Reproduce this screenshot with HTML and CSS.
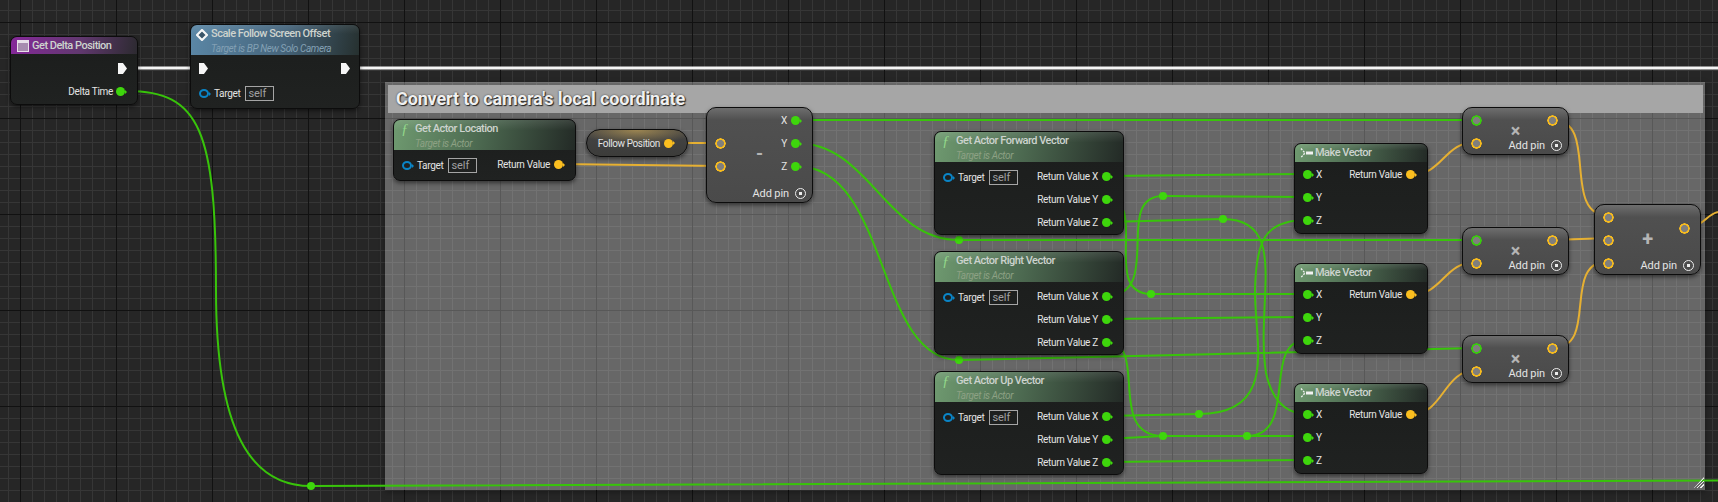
FILE: index.html
```html
<!DOCTYPE html>
<html>

<head>
	<title>Blueprint Graph</title>
	<link rel="stylesheet" href="styles.css">
</head>

<body>
	<div class="graph">

		<div class="comment">
			<div class="comment-title">Convert to camera's local coordinate</div>
		</div>

		<svg class="wires" width="1718" height="502" viewBox="0 0 1718 502">
			<g class="wire-exec">
				<path d="M127 68H199"/>
				<path d="M349 68H1718"/>
			</g>
			<g class="wire-green">
				<path d="M127 91C200 91 216 130 216 290C216 430 250 486 311 486L1718 480.5"/>
				<path d="M796 120H1477"/>
				<path d="M796 143C870 143 885 240 959 240H1477"/>
				<path d="M796 166C890 166 875 360 959 360L1477 348"/>
				<path d="M1106 176L1307 174"/>
				<path d="M1106 199C1150 199 1100 294 1151 294H1307"/>
				<path d="M1106 296C1165 296 1112 196 1163 196L1307 197"/>
				<path d="M1106 222L1223 219C1290 219 1255 300 1266 373C1272 400 1285 414 1307 414"/>
				<path d="M1106 319L1307 317"/>
				<path d="M1106 342C1150 342 1105 436 1163 436H1307"/>
				<path d="M1106 439L1163 436"/>
				<path d="M1247 436C1300 436 1260 340 1307 340"/>
				<path d="M1106 416L1199 414C1280 414 1254 340 1255 290C1256 240 1265 220 1307 220"/>
				<path d="M1106 462L1307 460"/>
			</g>
			<g class="wire-orange">
				<path d="M669 143H720"/>
				<path d="M558 164L720 166"/>
				<path d="M1409 175C1445 175 1442 142 1477 142"/>
				<path d="M1409 295C1445 295 1442 262 1477 262"/>
				<path d="M1409 415C1445 415 1442 370 1477 370"/>
				<path d="M1553 120C1600 120 1560 216 1609 216"/>
				<path d="M1553 240L1609 238"/>
				<path d="M1553 348C1600 348 1560 261 1609 261"/>
				<path d="M1685 227C1705 227 1705 215 1718 212"/>
			</g>
			<g class="knots">
				<circle cx="311" cy="486" r="4"/>
				<circle cx="959" cy="240" r="4"/>
				<circle cx="959" cy="360" r="4"/>
				<circle cx="1151" cy="294" r="4"/>
				<circle cx="1163" cy="196" r="4"/>
				<circle cx="1223" cy="219" r="4"/>
				<circle cx="1199" cy="414" r="4"/>
				<circle cx="1163" cy="436" r="4"/>
				<circle cx="1247" cy="436" r="4"/>
			</g>
		</svg>

		<!-- event and call nodes -->
		<div class="node n-delta">
			<div class="head head-purple">
				<svg class="ico" width="12" height="12" viewBox="0 0 12 12"><rect width="12" height="12" fill="#e8e0ea"/><rect x="1" y="3" width="10" height="8" fill="#a78cb0"/></svg>
				<span class="title">Get Delta Position</span>
			</div>
			<div class="pins pins-delta">
				<div class="col col-out">
					<div class="row"><i class="exec"></i></div>
					<div class="row"><span>Delta Time</span><i class="pin green"></i></div>
				</div>
			</div>
		</div>

		<div class="node n-scale">
			<div class="head head-blue head-tall">
				<svg class="ico" width="12" height="12" viewBox="0 0 12 12"><path d="M6 1L11 6L6 11L1 6Z" fill="#3a5568" stroke="#f6f6f6" stroke-width="2.2"/></svg>
				<div>
					<div class="title">Scale Follow Screen Offset</div>
					<div class="sub sub-blue">Target is BP New Solo Camera</div>
				</div>
			</div>
			<div class="pins pins-scale">
				<div class="col">
					<div class="row"><i class="exec"></i></div>
					<div class="row"><i class="ref"></i><span>Target</span><b class="self">self</b></div>
				</div>
				<div class="col col-out">
					<div class="row"><i class="exec"></i></div>
				</div>
			</div>
		</div>

		<!-- actor getters -->
		<div class="node n-location">
			<div class="head head-green head-tall">
				<em class="fn">&#402;</em>
				<div>
					<div class="title">Get Actor Location</div>
					<div class="sub">Target is Actor</div>
				</div>
			</div>
			<div class="pins pins-fn">
				<div class="col col-target">
					<div class="row"><i class="ref"></i><span>Target</span><b class="self">self</b></div>
				</div>
				<div class="col col-out">
					<div class="row"><span>Return Value</span><i class="pin orange"></i></div>
				</div>
			</div>
		</div>

		<div class="node n-forward">
			<div class="head head-green head-tall">
				<em class="fn">&#402;</em>
				<div>
					<div class="title">Get Actor Forward Vector</div>
					<div class="sub">Target is Actor</div>
				</div>
			</div>
			<div class="pins pins-fn">
				<div class="col col-target">
					<div class="row"><i class="ref"></i><span>Target</span><b class="self">self</b></div>
				</div>
				<div class="col col-out">
					<div class="row"><span>Return Value X</span><i class="pin green"></i></div>
					<div class="row"><span>Return Value Y</span><i class="pin green"></i></div>
					<div class="row"><span>Return Value Z</span><i class="pin green"></i></div>
				</div>
			</div>
		</div>

		<div class="node n-right">
			<div class="head head-green head-tall">
				<em class="fn">&#402;</em>
				<div>
					<div class="title">Get Actor Right Vector</div>
					<div class="sub">Target is Actor</div>
				</div>
			</div>
			<div class="pins pins-fn">
				<div class="col col-target">
					<div class="row"><i class="ref"></i><span>Target</span><b class="self">self</b></div>
				</div>
				<div class="col col-out">
					<div class="row"><span>Return Value X</span><i class="pin green"></i></div>
					<div class="row"><span>Return Value Y</span><i class="pin green"></i></div>
					<div class="row"><span>Return Value Z</span><i class="pin green"></i></div>
				</div>
			</div>
		</div>

		<div class="node n-up">
			<div class="head head-green head-tall">
				<em class="fn">&#402;</em>
				<div>
					<div class="title">Get Actor Up Vector</div>
					<div class="sub">Target is Actor</div>
				</div>
			</div>
			<div class="pins pins-fn">
				<div class="col col-target">
					<div class="row"><i class="ref"></i><span>Target</span><b class="self">self</b></div>
				</div>
				<div class="col col-out">
					<div class="row"><span>Return Value X</span><i class="pin green"></i></div>
					<div class="row"><span>Return Value Y</span><i class="pin green"></i></div>
					<div class="row"><span>Return Value Z</span><i class="pin green"></i></div>
				</div>
			</div>
		</div>

		<!-- variable -->
		<div class="node var n-follow">
			<span>Follow Position</span><i class="pin orange"></i>
		</div>

		<!-- math nodes -->
		<div class="node op n-sub">
			<div class="col op-in">
				<div class="row"></div>
				<div class="row"><i class="ring orange"></i></div>
				<div class="row"><i class="ring orange"></i></div>
			</div>
			<div class="op-sign">-</div>
			<div class="col col-out op-out">
				<div class="row"><span>X</span><i class="pin green"></i></div>
				<div class="row"><span>Y</span><i class="pin green"></i></div>
				<div class="row"><span>Z</span><i class="pin green"></i></div>
			</div>
			<div class="addpin"><span>Add pin</span><i class="plus"></i></div>
		</div>

		<div class="node op n-mul1">
			<div class="col op-in">
				<div class="row"><i class="ring green"></i></div>
				<div class="row"><i class="ring orange"></i></div>
			</div>
			<div class="op-sign">&#215;</div>
			<div class="col col-out op-out">
				<div class="row"><i class="ring orange"></i></div>
			</div>
			<div class="addpin"><span>Add pin</span><i class="plus"></i></div>
		</div>

		<div class="node op n-mul2">
			<div class="col op-in">
				<div class="row"><i class="ring green"></i></div>
				<div class="row"><i class="ring orange"></i></div>
			</div>
			<div class="op-sign">&#215;</div>
			<div class="col col-out op-out">
				<div class="row"><i class="ring orange"></i></div>
			</div>
			<div class="addpin"><span>Add pin</span><i class="plus"></i></div>
		</div>

		<div class="node op n-mul3">
			<div class="col op-in">
				<div class="row"><i class="ring green"></i></div>
				<div class="row"><i class="ring orange"></i></div>
			</div>
			<div class="op-sign">&#215;</div>
			<div class="col col-out op-out">
				<div class="row"><i class="ring orange"></i></div>
			</div>
			<div class="addpin"><span>Add pin</span><i class="plus"></i></div>
		</div>

		<div class="node op n-add">
			<div class="col op-in">
				<div class="row"><i class="ring orange"></i></div>
				<div class="row"><i class="ring orange"></i></div>
				<div class="row"><i class="ring orange"></i></div>
			</div>
			<div class="op-sign op-plus">+</div>
			<div class="col col-out op-out add-out">
				<div class="row"><i class="ring orange"></i></div>
			</div>
			<div class="addpin"><span>Add pin</span><i class="plus"></i></div>
		</div>

		<!-- make vector -->
		<div class="node n-mv1">
			<div class="head head-green head-short">
				<svg class="ico" width="13" height="12" viewBox="0 0 13 12"><path d="M1 1.5L5 6L1 10.5" fill="none" stroke="#f2f2f2" stroke-width="1.3" stroke-dasharray="2 1.2"/><rect x="6" y="4.5" width="7" height="3" fill="#f2f2f2"/></svg>
				<span class="title">Make Vector</span>
			</div>
			<div class="pins pins-mv">
				<div class="col">
					<div class="row"><i class="pin green"></i><span>X</span></div>
					<div class="row"><i class="pin green"></i><span>Y</span></div>
					<div class="row"><i class="pin green"></i><span>Z</span></div>
				</div>
				<div class="col col-out">
					<div class="row"><span>Return Value</span><i class="pin orange"></i></div>
				</div>
			</div>
		</div>

		<div class="node n-mv2">
			<div class="head head-green head-short">
				<svg class="ico" width="13" height="12" viewBox="0 0 13 12"><path d="M1 1.5L5 6L1 10.5" fill="none" stroke="#f2f2f2" stroke-width="1.3" stroke-dasharray="2 1.2"/><rect x="6" y="4.5" width="7" height="3" fill="#f2f2f2"/></svg>
				<span class="title">Make Vector</span>
			</div>
			<div class="pins pins-mv">
				<div class="col">
					<div class="row"><i class="pin green"></i><span>X</span></div>
					<div class="row"><i class="pin green"></i><span>Y</span></div>
					<div class="row"><i class="pin green"></i><span>Z</span></div>
				</div>
				<div class="col col-out">
					<div class="row"><span>Return Value</span><i class="pin orange"></i></div>
				</div>
			</div>
		</div>

		<div class="node n-mv3">
			<div class="head head-green head-short">
				<svg class="ico" width="13" height="12" viewBox="0 0 13 12"><path d="M1 1.5L5 6L1 10.5" fill="none" stroke="#f2f2f2" stroke-width="1.3" stroke-dasharray="2 1.2"/><rect x="6" y="4.5" width="7" height="3" fill="#f2f2f2"/></svg>
				<span class="title">Make Vector</span>
			</div>
			<div class="pins pins-mv">
				<div class="col">
					<div class="row"><i class="pin green"></i><span>X</span></div>
					<div class="row"><i class="pin green"></i><span>Y</span></div>
					<div class="row"><i class="pin green"></i><span>Z</span></div>
				</div>
				<div class="col col-out">
					<div class="row"><span>Return Value</span><i class="pin orange"></i></div>
				</div>
			</div>
		</div>

		<div class="resize"></div>
	</div>
</body>

</html>
```

FILE: styles.css
```css
html, body {
	margin: 0;
	padding: 0;
	background: #262626;
	overflow: hidden;
}

.graph {
	position: relative;
	width: 1718px;
	height: 502px;
	overflow: hidden;
	font-family: Roboto, "Liberation Sans", sans-serif;
	background-color: #262626;
	background-image:
		linear-gradient(to right, #111 1px, transparent 1px),
		linear-gradient(to bottom, #111 1px, transparent 1px),
		linear-gradient(to right, #363636 1px, transparent 1px),
		linear-gradient(to bottom, #363636 1px, transparent 1px);
	background-size: 96px 96px, 96px 96px, 12px 12px, 12px 12px;
	background-position: 20px 22px, 20px 22px, 8px 10px, 8px 10px;
}

/* comment box */
.comment {
	position: absolute;
	left: 385px;
	top: 82px;
	width: 1320px;
	height: 408px;
	background: rgba(255, 255, 255, 0.3);
	box-shadow: 0 2px 6px rgba(0, 0, 0, 0.35);
}

.comment-title {
	margin: 3px 2px 0 3px;
	height: 28px;
	padding-left: 8px;
	background: #a6a6a6;
	color: #f0f0f0;
	font-size: 18px;
	font-weight: 700;
	line-height: 28px;
	letter-spacing: -0.15px;
	text-shadow: 1px 1px 1px #222, 0 0 2px #444;
}

/* wires */
.wires {
	position: absolute;
	left: 0;
	top: 0;
}

.wires path {
	fill: none;
}

.wire-exec path {
	stroke: #f4f4f4;
	stroke-width: 3;
}

.wire-green path {
	stroke: #38c40a;
	stroke-width: 2;
}

.wire-orange path {
	stroke: #e6b032;
	stroke-width: 2;
}

.knots circle {
	fill: #3ed60c;
}

/* nodes */
.node {
	position: absolute;
	box-sizing: border-box;
	background: linear-gradient(#1b1d1c, #202221);
	border: 1px solid #0c0c0c;
	border-radius: 7px;
	box-shadow: 0 2px 4px rgba(0, 0, 0, 0.5);
	color: #e4e4e4;
	font-size: 10px;
	letter-spacing: -0.3px;
}

.n-delta { left: 10px; top: 36px; width: 128px; height: 69px; }
.n-scale { left: 190px; top: 24px; width: 170px; height: 85px; }
.n-location { left: 393px; top: 119px; width: 183px; height: 62px; }
.n-forward { left: 934px; top: 131px; width: 190px; height: 104px; }
.n-right { left: 934px; top: 251px; width: 190px; height: 104px; }
.n-up { left: 934px; top: 371px; width: 190px; height: 104px; }
.n-follow { left: 586px; top: 129px; width: 102px; height: 28px; }
.n-sub { left: 706px; top: 107px; width: 107px; height: 96px; }
.n-mul1 { left: 1462px; top: 107px; width: 107px; height: 48px; }
.n-mul2 { left: 1462px; top: 227px; width: 107px; height: 48px; }
.n-mul3 { left: 1462px; top: 335px; width: 107px; height: 48px; }
.n-add { left: 1594px; top: 204px; width: 107px; height: 71px; }
.n-mv1 { left: 1294px; top: 143px; width: 134px; height: 91px; }
.n-mv2 { left: 1294px; top: 263px; width: 134px; height: 91px; }
.n-mv3 { left: 1294px; top: 383px; width: 134px; height: 91px; }

.head {
	display: flex;
	box-sizing: border-box;
	align-items: center;
	gap: 3px;
	padding-left: 5px;
	border-radius: 6px 6px 0 0;
}

.head-purple {
	height: 17px;
	padding-left: 6px;
	background: linear-gradient(100deg, #86289a 0%, #61386f 55%, #2c2a30 100%);
}

.head-blue {
	background:
		linear-gradient(to bottom, rgba(255, 255, 255, 0.08), transparent 30%),
		linear-gradient(100deg, #5b87a6 0%, #46657c 55%, #26302f 100%);
}

.head-green {
	background:
		linear-gradient(to bottom, rgba(255, 255, 255, 0.1), transparent 35%),
		linear-gradient(100deg, #6f9a70 0%, #4e6c52 45%, #232a26 100%);
}

.head-tall {
	height: 30px;
	align-items: flex-start;
	padding-top: 2px;
}

.head-short {
	height: 18px;
	gap: 2px;
}

.head .ico {
	flex: none;
}

.head-tall .ico {
	margin-top: 2px;
}

.title {
	color: #cdd3ce;
	font-size: 11px;
	font-weight: 500;
	line-height: 14px;
	letter-spacing: -0.5px;
}

.sub {
	margin-top: 1px;
	color: #8da184;
	font-size: 10px;
	font-style: italic;
	line-height: 13px;
	letter-spacing: -0.4px;
}

.sub-blue {
	color: #83a0b4;
}

.fn {
	width: 11px;
	margin-left: 2px;
	color: #92d68a;
	font-family: "Liberation Serif", serif;
	font-size: 15px;
	line-height: 15px;
}

.pins {
	display: flex;
	justify-content: space-between;
	padding: 0 12px 0 8px;
}

.col {
	display: flex;
	flex-direction: column;
}

.col-out {
	align-items: flex-end;
	margin-left: auto;
}

.col-target {
	margin-top: 1px;
}

.row {
	display: flex;
	align-items: center;
	gap: 4px;
	height: 23px;
}

.pins-delta { padding-top: 3px; }
.pins-delta .row { gap: 3px; }
.pins-delta .exec { margin-right: -2px; }
.pins-scale { padding-top: 2px; padding-right: 9px; }
.pins-scale .row + .row { margin-top: 2px; }
.pins-fn { padding-top: 3px; }
.pins-mv { padding-top: 1px; }

/* pins */
.pin {
	position: relative;
	display: block;
	flex: none;
	width: 9px;
	height: 9px;
	border-radius: 50%;
}

.pin::after {
	content: "";
	position: absolute;
	left: 9px;
	top: 2.5px;
	border-left: 2px solid currentColor;
	border-top: 2px solid transparent;
	border-bottom: 2px solid transparent;
}

.pin.green {
	background: #3ed60c;
	color: #3ed60c;
}

.pin.orange {
	background: #fbbe1f;
	color: #fbbe1f;
}

.exec {
	display: block;
	width: 9px;
	height: 11px;
	background: #f6f6f6;
	clip-path: polygon(0 0, 55% 0, 100% 50%, 55% 100%, 0 100%);
}

.ref {
	position: relative;
	display: block;
	flex: none;
	box-sizing: border-box;
	width: 10px;
	height: 9px;
	margin-right: 1px;
	border: 2px solid #0a84c6;
	border-radius: 50%;
}

.ref::after {
	content: "";
	position: absolute;
	left: 8px;
	top: 0.5px;
	border-left: 2px solid #0a84c6;
	border-top: 2px solid transparent;
	border-bottom: 2px solid transparent;
}

.self {
	box-sizing: border-box;
	width: 29px;
	height: 15px;
	padding-left: 3px;
	border: 1px solid #a5a5a5;
	color: #a0a0a0;
	font-size: 11px;
	font-weight: 400;
	line-height: 13px;
	letter-spacing: -0.1px;
}

.ring {
	display: block;
	flex: none;
	width: 11px;
	height: 11px;
	border-radius: 50%;
	background: radial-gradient(circle closest-side, #807f7d 0, #807f7d 3.3px, var(--ring) 3.8px, var(--ring) 5px, transparent 5.5px);
}

.ring.orange {
	--ring: #f8bc1e;
}

.ring.green {
	--ring: #38cc0c;
}

/* variable node */
.var {
	display: flex;
	align-items: center;
	justify-content: flex-end;
	gap: 4px;
	padding-right: 14px;
	border-radius: 14px;
	background:
		radial-gradient(ellipse 60px 14px at 50% 0, rgba(214, 176, 90, 0.6), transparent),
		linear-gradient(#444, #3c3c3a);
	letter-spacing: -0.4px;
}

/* math nodes */
.op {
	border-radius: 10px;
	background: linear-gradient(#6e6e6e 0, #505050 12px, #4a4a4a 100%);
}

.op-in {
	position: absolute;
	left: 8px;
	top: 1px;
}

.op-out {
	position: absolute;
	right: 10px;
	top: 1px;
}

.n-sub .op-out { right: 12px; }

.op .row {
	height: 23px;
	gap: 4px;
}

.n-add .op-out {
	top: 12px;
}

.op-sign {
	position: absolute;
	left: 0;
	right: 0;
	top: 37px;
	color: #b5b5b5;
	font-size: 18px;
	font-weight: 700;
	line-height: 18px;
	text-align: center;
}

.n-mul1 .op-sign, .n-mul2 .op-sign, .n-mul3 .op-sign {
	top: 14px;
}

.op-plus {
	top: 25px;
	font-size: 20px;
}

.addpin {
	position: absolute;
	right: 6px;
	bottom: 2px;
	display: flex;
	align-items: center;
	gap: 6px;
	font-size: 11px;
	letter-spacing: -0.1px;
}

.plus {
	display: block;
	box-sizing: border-box;
	width: 11px;
	height: 11px;
	border: 1px solid #ececec;
	border-radius: 50%;
	background: radial-gradient(circle, #ececec 0, #ececec 1.5px, transparent 2px);
}

/* resize grip of the comment */
.resize {
	position: absolute;
	left: 1694px;
	top: 477px;
	width: 10px;
	height: 11px;
	background: repeating-linear-gradient(135deg, transparent 0, transparent 1.5px, #eee 1.5px, #eee 2.6px);
	clip-path: polygon(100% 0, 100% 100%, 0 100%);
}
```
